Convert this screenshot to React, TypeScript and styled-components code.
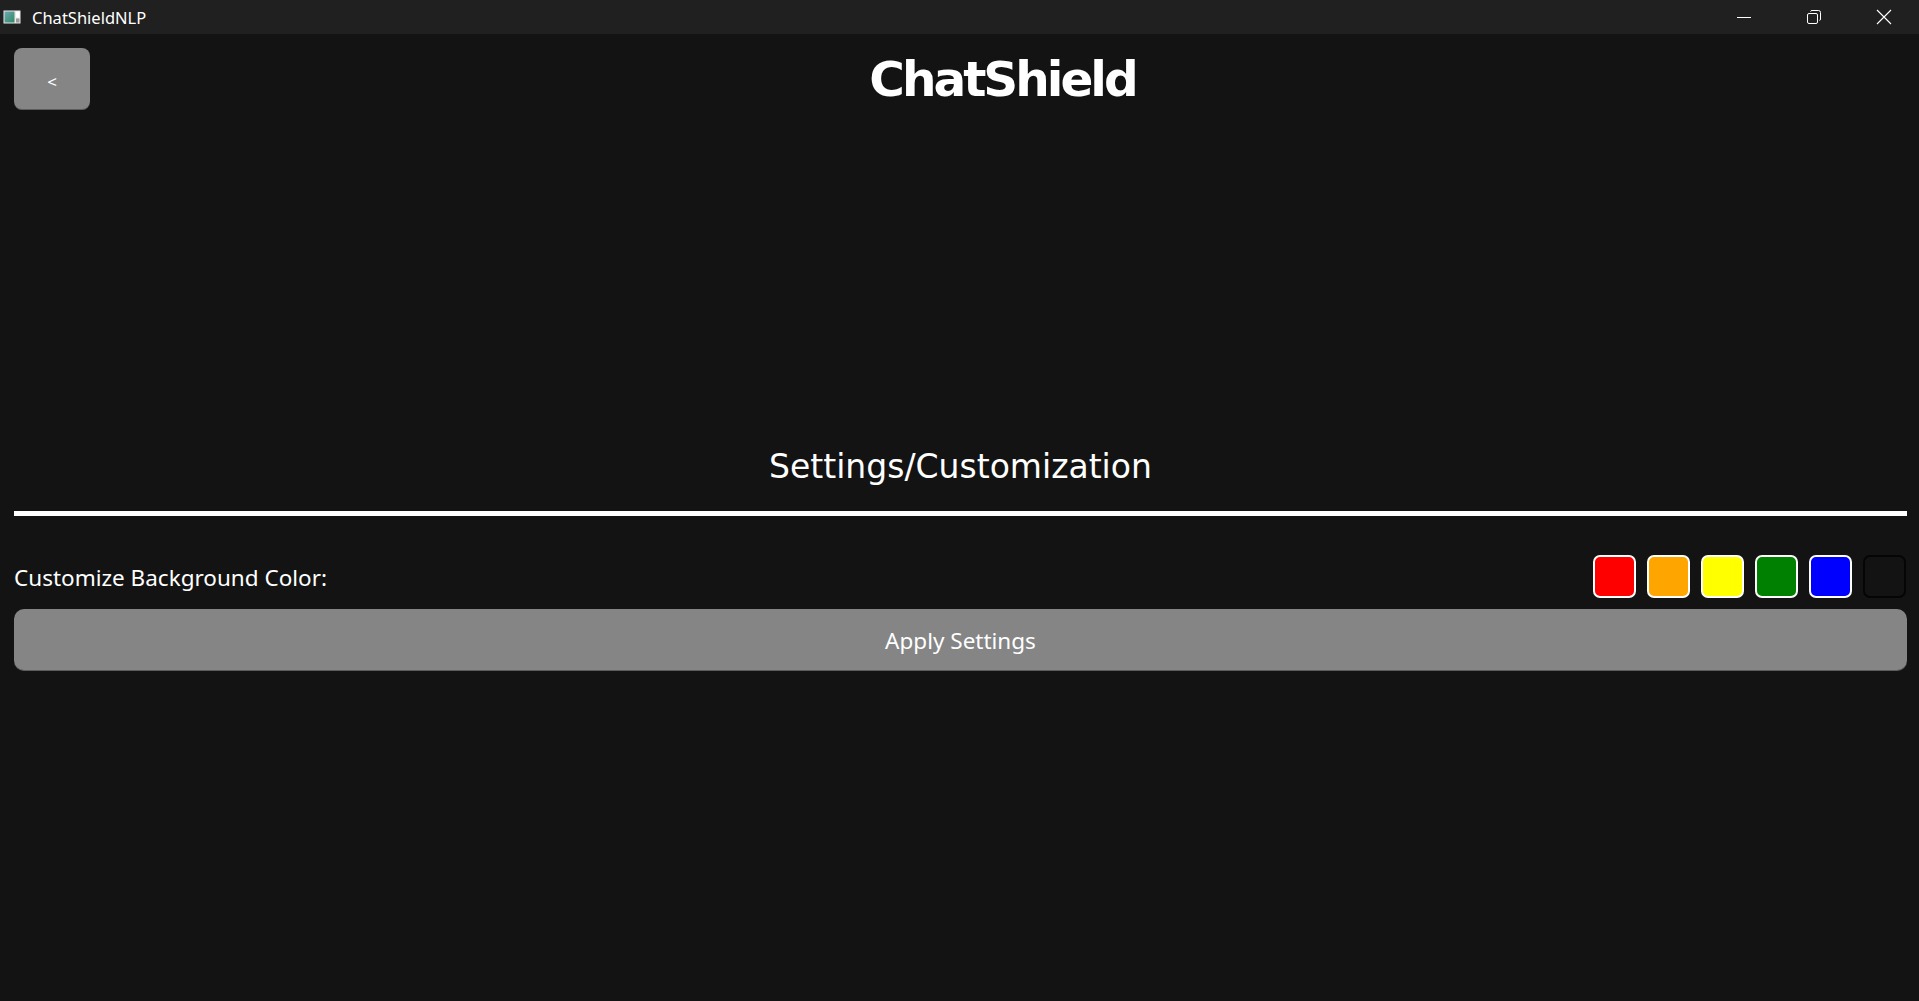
import React from "react";
import styled, { createGlobalStyle } from "styled-components";

const GlobalStyle = createGlobalStyle`
  html, body {
    margin: 0;
    padding: 0;
    background: #131313;
    height: 100%;
    overflow: hidden;
  }
  #root { min-height: 100vh; background: #131313; }
  * { box-sizing: border-box; }
`;

const Window = styled.div`
  display: flex;
  flex-direction: column;
  min-height: 100vh;
  background: #131313;
  color: #ffffff;
`;

const TitleBar = styled.div`
  height: 34px;
  background: #202020;
  display: flex;
  align-items: center;
  justify-content: space-between;
  flex-shrink: 0;
`;

const TitleLeft = styled.div`
  display: flex;
  align-items: center;
  gap: 11px;
  padding-left: 3px;
  font-family: "Noto Sans", "Open Sans", sans-serif;
  font-size: 16.5px;
  color: #ffffff;
`;

const Controls = styled.div`
  display: flex;
  align-items: center;
  height: 100%;
`;

const ControlButton = styled.div`
  width: 70px;
  height: 100%;
  display: flex;
  align-items: center;
  justify-content: center;
`;

const Content = styled.div`
  padding: 14px 12px 0 14px;
  display: flex;
  flex-direction: column;
`;

const Header = styled.div`
  display: flex;
  align-items: center;
`;

const BackButton = styled.button`
  width: 76px;
  height: 62px;
  border: none;
  border-radius: 8px;
  background: #858585;
  box-shadow: inset 0 -1px 0 rgba(0, 0, 0, 0.3);
  color: #ffffff;
  font-family: "Noto Sans", sans-serif;
  font-size: 17px;
  display: flex;
  align-items: center;
  justify-content: center;
  padding: 5px 0 0 0;
  cursor: pointer;
`;

const AppTitle = styled.h1`
  flex: 1;
  margin: 0;
  padding-left: 8px;
  text-align: center;
  font-family: "DejaVu Sans", Verdana, sans-serif;
  font-weight: bold;
  font-size: 48.5px;
  letter-spacing: -3px;
  line-height: 58px;
  color: #ffffff;
`;

const SectionHeading = styled.h2`
  margin: 338px 0 0 0;
  text-align: center;
  font-family: "DejaVu Sans", Verdana, sans-serif;
  font-weight: normal;
  font-size: 33px;
  line-height: 38px;
  color: #ffffff;
`;

const Divider = styled.div`
  margin-top: 25px;
  height: 5px;
  background: #ffffff;
`;

const OptionRow = styled.div`
  margin-top: 39px;
  display: flex;
  align-items: center;
  justify-content: space-between;
`;

const OptionLabel = styled.span`
  font-family: "Noto Sans", "Open Sans", sans-serif;
  font-size: 22.5px;
  color: #ffffff;
  padding-top: 2px;
`;

const Swatches = styled.div`
  display: flex;
  gap: 11px;
  padding-right: 1px;
`;

const Swatch = styled.button<{ $color: string; $border: string }>`
  width: 43px;
  height: 43px;
  padding: 0;
  border-radius: 7px;
  border: 2px solid ${(p) => p.$border};
  background: ${(p) => p.$color};
  cursor: pointer;
`;

const ApplyButton = styled.button`
  margin-top: 11px;
  height: 62px;
  width: 100%;
  border: none;
  border-radius: 10px;
  background: #858585;
  box-shadow: inset 0 -1px 0 rgba(0, 0, 0, 0.3);
  color: #ffffff;
  font-family: "Noto Sans", "Open Sans", sans-serif;
  font-size: 22.5px;
  padding-top: 2px;
  cursor: pointer;
`;

const swatches = [
  { color: "#ff0000", border: "#ffffff" },
  { color: "#ffa500", border: "#ffffff" },
  { color: "#ffff00", border: "#ffffff" },
  { color: "#008000", border: "#ffffff" },
  { color: "#0000ff", border: "#ffffff" },
  { color: "#131313", border: "#050505" },
];

const AppIcon = () => (
  <svg width="18" height="14" viewBox="0 0 18 14">
    <defs>
      <linearGradient id="g" x1="0" y1="0" x2="1" y2="1">
        <stop offset="0" stopColor="#6fa7b8" />
        <stop offset="1" stopColor="#2f8a5e" />
      </linearGradient>
    </defs>
    <rect x="0.5" y="0.5" width="17" height="13" fill="#e9e9e9" />
    <rect x="1.5" y="1.5" width="10" height="11" fill="url(#g)" />
    <rect x="13" y="1.5" width="3.5" height="6" fill="#ffffff" />
    <rect x="13" y="8.5" width="3.5" height="4" fill="#9a9a9a" />
  </svg>
);

export default function App() {
  return (
    <>
      <GlobalStyle />
      <Window>
        <TitleBar>
          <TitleLeft>
            <AppIcon />
            <span>ChatShieldNLP</span>
          </TitleLeft>
          <Controls>
            <ControlButton>
              <svg width="16" height="16" viewBox="0 0 16 16">
                <line x1="1" y1="8.5" x2="15" y2="8.5" stroke="#fff" strokeWidth="1" />
              </svg>
            </ControlButton>
            <ControlButton>
              <svg width="16" height="16" viewBox="0 0 16 16">
                <rect x="1.5" y="4.5" width="10" height="10" rx="1.5" fill="none" stroke="#fff" strokeWidth="1" />
                <path d="M4.5 2.5 Q4.8 1.5 6 1.5 H12.5 Q14.5 1.5 14.5 3.5 V10 Q14.5 11.3 13.5 11.5" fill="none" stroke="#fff" strokeWidth="1" />
              </svg>
            </ControlButton>
            <ControlButton>
              <svg width="16" height="16" viewBox="0 0 16 16">
                <path d="M1 1 L15 15 M15 1 L1 15" stroke="#fff" strokeWidth="1.1" />
              </svg>
            </ControlButton>
          </Controls>
        </TitleBar>
        <Content>
          <Header>
            <BackButton>&lt;</BackButton>
            <AppTitle>ChatShield</AppTitle>
          </Header>
          <SectionHeading>Settings/Customization</SectionHeading>
          <Divider />
          <OptionRow>
            <OptionLabel>Customize Background Color:</OptionLabel>
            <Swatches>
              {swatches.map((s) => (
                <Swatch key={s.color} $color={s.color} $border={s.border} />
              ))}
            </Swatches>
          </OptionRow>
          <ApplyButton>Apply Settings</ApplyButton>
        </Content>
      </Window>
    </>
  );
}
